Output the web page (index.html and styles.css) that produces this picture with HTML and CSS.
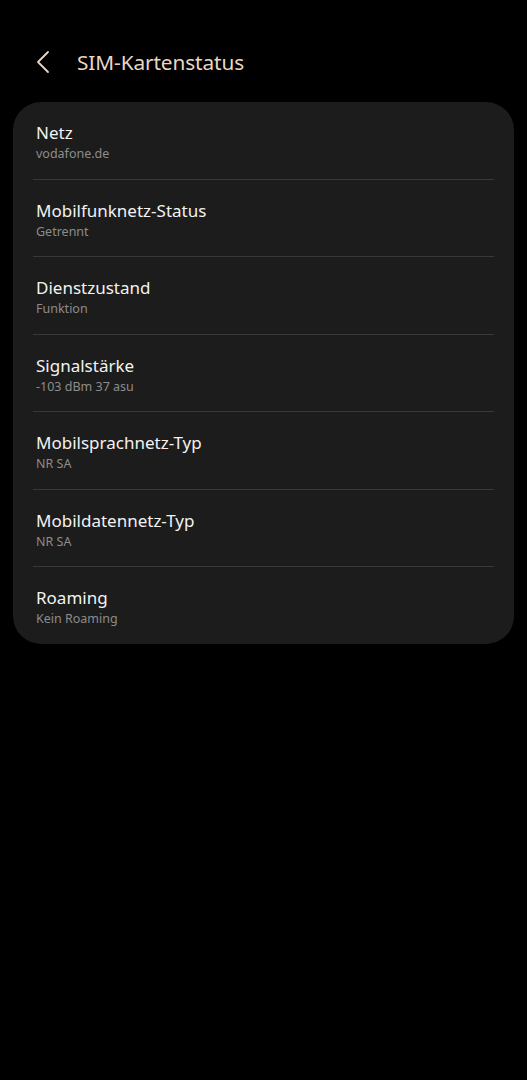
FILE: index.html
```html
<!DOCTYPE html>
<html lang="de">
<head>
<meta charset="utf-8">
<link rel="stylesheet" href="styles.css">
</head>
<body>
<header class="topbar">
  <svg class="back" width="16" height="24" viewBox="0 0 16 24"><path d="M13 2 L3 12 L13 22" fill="none" stroke="#e6d6c8" stroke-width="1.8" stroke-linecap="round" stroke-linejoin="round"/></svg>
  <h1 class="title">SIM-Kartenstatus</h1>
</header>
<main class="card">
  <div class="row"><div class="label">Netz</div><div class="value">vodafone.de</div></div>
  <div class="row"><div class="label">Mobilfunknetz-Status</div><div class="value">Getrennt</div></div>
  <div class="row"><div class="label">Dienstzustand</div><div class="value">Funktion</div></div>
  <div class="row"><div class="label">Signalstärke</div><div class="value">-103 dBm 37 asu</div></div>
  <div class="row"><div class="label">Mobilsprachnetz-Typ</div><div class="value">NR SA</div></div>
  <div class="row"><div class="label">Mobildatennetz-Typ</div><div class="value">NR SA</div></div>
  <div class="row"><div class="label">Roaming</div><div class="value">Kein Roaming</div></div>
</main>
</body>
</html>
```
FILE: styles.css
```css
html, body {
  margin: 0;
  padding: 0;
  background: #000;
}
body {
  font-family: "Noto Sans", "Open Sans", sans-serif;
  width: 527px;
  height: 1080px;
  overflow: hidden;
}
.topbar {
  display: flex;
  align-items: center;
  height: 50px;
  padding: 37px 0 0 35px;
  gap: 26px;
}
.back {
  display: block;
}
.title {
  margin: 0;
  font-size: 20.8px;
  font-weight: 400;
  color: #e8d6c6;
  letter-spacing: -0.1px;
}
.card {
  margin: 15px 13px 0 13px;
  background: #1c1c1c;
  border-radius: 28px;
  padding: 0 20px;
}
.row {
  height: 77.5px;
  display: flex;
  flex-direction: column;
  justify-content: center;
  padding-left: 3px;
  padding-top: 4.5px;
  box-sizing: border-box;
  border-bottom: 1px solid #383838;
}
.row:last-child {
  border-bottom: none;
  height: 77px;
}
.label {
  font-size: 17px;
  color: #f2f2f2;
  line-height: 22px;
}
.value {
  font-size: 12.5px;
  color: #8c8c8c;
  line-height: 18px;
  margin-top: 1px;
}
```
